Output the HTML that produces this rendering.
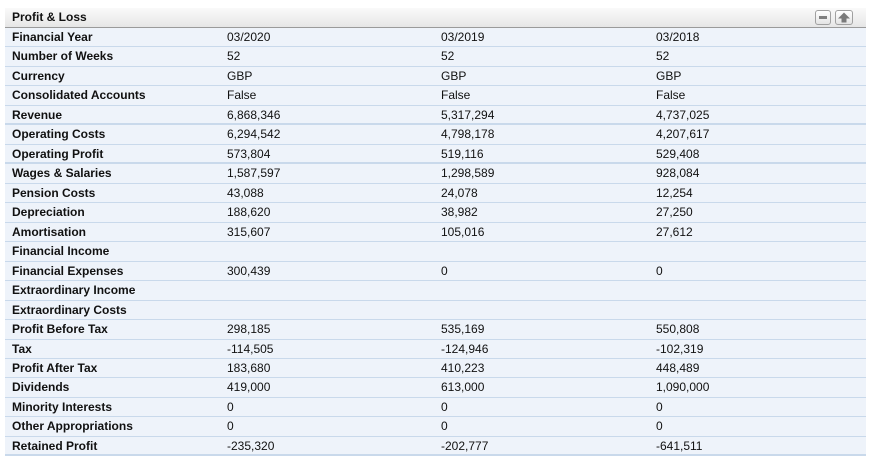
<!DOCTYPE html>
<html><head><style>
body{margin:0;background:#fff;width:872px;height:470px;overflow:hidden;font-family:"Liberation Sans",Arial,sans-serif;}
.p{position:absolute;left:5px;top:8px;width:861px;}
.h{height:19px;background:linear-gradient(#fafafa,#e6e6e6);border-bottom:1px solid #9a9a9a;font-weight:bold;font-size:12px;line-height:19px;padding-left:7px;position:relative;color:#111}
.b{position:absolute;top:2px;width:16px;height:15px;border:1px solid #a0a0a0;border-radius:3px;background:linear-gradient(#fff,#e4e4e4);box-sizing:border-box}
.r{height:19.48px;box-sizing:border-box;border-bottom:1px solid #c9d9eb;background:#eef3fa;font-size:12px;line-height:18px;position:relative;color:#111}
.r.t{border-bottom-width:2px}
.r span{position:absolute;top:0}
.r span:first-child{left:7px;font-weight:bold}
.c1{left:222px}.c2{left:436px}.c3{left:651px}
</style></head><body>
<div class="p">
<div class="h">Profit &amp; Loss
<div class="b" style="left:810px"><div style="position:absolute;left:3px;top:5px;width:8px;height:3px;background:#808080"></div></div>
<div class="b" style="left:830px;width:18px"><svg width="16" height="13" style="position:absolute;left:0;top:0"><path d="M8 1.5L14 7.5H10.5V11.5H5.5V7.5H2Z" fill="#7a7a7a"/></svg></div>
</div>
<div class="r"><span>Financial Year</span><span class="c1">03/2020</span><span class="c2">03/2019</span><span class="c3">03/2018</span></div>
<div class="r"><span>Number of Weeks</span><span class="c1">52</span><span class="c2">52</span><span class="c3">52</span></div>
<div class="r"><span>Currency</span><span class="c1">GBP</span><span class="c2">GBP</span><span class="c3">GBP</span></div>
<div class="r"><span>Consolidated Accounts</span><span class="c1">False</span><span class="c2">False</span><span class="c3">False</span></div>
<div class="r t"><span>Revenue</span><span class="c1">6,868,346</span><span class="c2">5,317,294</span><span class="c3">4,737,025</span></div>
<div class="r"><span>Operating Costs</span><span class="c1">6,294,542</span><span class="c2">4,798,178</span><span class="c3">4,207,617</span></div>
<div class="r t"><span>Operating Profit</span><span class="c1">573,804</span><span class="c2">519,116</span><span class="c3">529,408</span></div>
<div class="r"><span>Wages &amp; Salaries</span><span class="c1">1,587,597</span><span class="c2">1,298,589</span><span class="c3">928,084</span></div>
<div class="r"><span>Pension Costs</span><span class="c1">43,088</span><span class="c2">24,078</span><span class="c3">12,254</span></div>
<div class="r"><span>Depreciation</span><span class="c1">188,620</span><span class="c2">38,982</span><span class="c3">27,250</span></div>
<div class="r"><span>Amortisation</span><span class="c1">315,607</span><span class="c2">105,016</span><span class="c3">27,612</span></div>
<div class="r"><span>Financial Income</span></div>
<div class="r"><span>Financial Expenses</span><span class="c1">300,439</span><span class="c2">0</span><span class="c3">0</span></div>
<div class="r"><span>Extraordinary Income</span></div>
<div class="r"><span>Extraordinary Costs</span></div>
<div class="r"><span>Profit Before Tax</span><span class="c1">298,185</span><span class="c2">535,169</span><span class="c3">550,808</span></div>
<div class="r"><span>Tax</span><span class="c1">-114,505</span><span class="c2">-124,946</span><span class="c3">-102,319</span></div>
<div class="r"><span>Profit After Tax</span><span class="c1">183,680</span><span class="c2">410,223</span><span class="c3">448,489</span></div>
<div class="r"><span>Dividends</span><span class="c1">419,000</span><span class="c2">613,000</span><span class="c3">1,090,000</span></div>
<div class="r"><span>Minority Interests</span><span class="c1">0</span><span class="c2">0</span><span class="c3">0</span></div>
<div class="r"><span>Other Appropriations</span><span class="c1">0</span><span class="c2">0</span><span class="c3">0</span></div>
<div class="r t"><span>Retained Profit</span><span class="c1">-235,320</span><span class="c2">-202,777</span><span class="c3">-641,511</span></div>
</div>
</body></html>
